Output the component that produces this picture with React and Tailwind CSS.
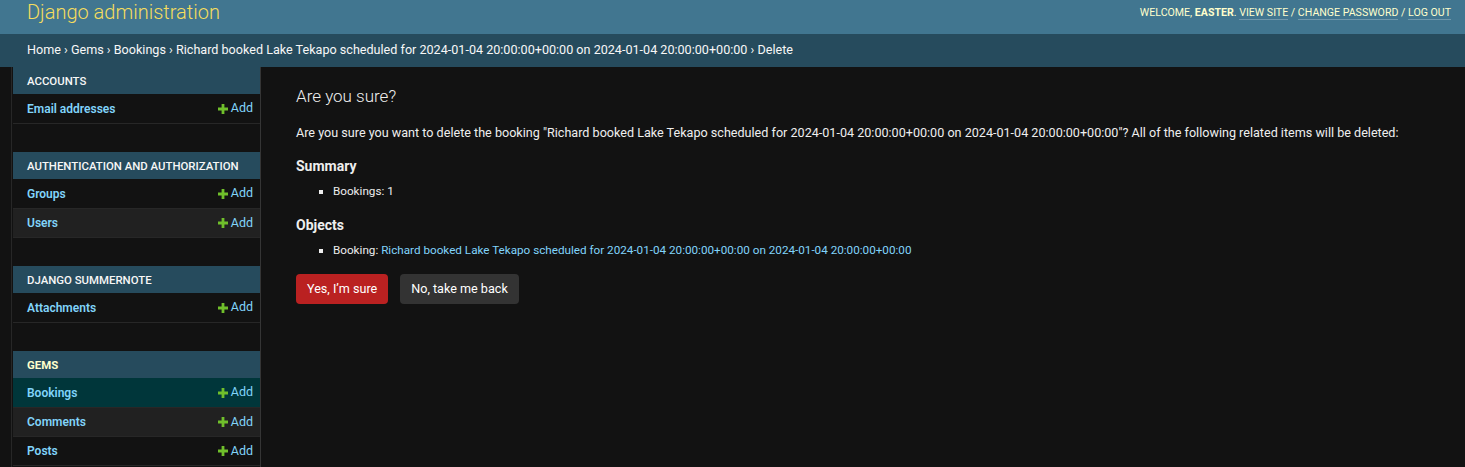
import React from 'react';

const apps = [
  { name: 'Accounts', models: ['Email addresses'] },
  { name: 'Authentication and Authorization', models: ['Groups', 'Users'] },
  { name: 'Django Summernote', models: ['Attachments'] },
  { name: 'Gems', models: ['Bookings', 'Comments', 'Posts'], current: true },
];

const booking = 'Richard booked Lake Tekapo scheduled for 2024-01-04 20:00:00+00:00 on 2024-01-04 20:00:00+00:00';

const PlusIcon = () => (
  <svg width="10" height="10" viewBox="0 0 10 10" className="mr-[3px]">
    <path d="M3.6 0h2.8v3.6H10v2.8H6.4V10H3.6V6.4H0V3.6h3.6z" fill="#70bf2b" />
  </svg>
);

const App = () => {
  return (
    <div className="min-h-screen bg-[#121212] text-[#eeeeee] text-[12.6px]" style={{ fontFamily: 'Roboto, "Liberation Sans", sans-serif' }}>
      {/* Header */}
      <div className="h-[34px] bg-[#417690] flex items-center justify-between pl-[27px] pr-[14px]">
        <div className="text-[20px] font-light text-[#f5dd5d] leading-none -mt-[10px]">Django administration</div>
        <div className="text-[10.6px] uppercase text-[#ffffcc] -mt-[9px]">
          Welcome, <strong className="font-bold">Easter</strong>.{' '}
          <a className="border-b border-white/25">View site</a> /{' '}
          <a className="border-b border-white/25">Change password</a> /{' '}
          <a className="border-b border-white/25">Log out</a>
        </div>
      </div>

      {/* Breadcrumbs */}
      <div className="h-[33px] bg-[#264b5d] flex items-center px-[27px] text-[#f7f7f7] text-[12.6px]">
        Home › Gems › Bookings › {booking} › Delete
      </div>

      <div className="flex">
        {/* Sidebar toggle strip */}
        <div className="w-[12px] border-r border-[#272727] shrink-0" />

        {/* Sidebar */}
        <div className="w-[249px] shrink-0 border-r border-[#353535] pl-[1px]">
          {apps.map((app) => (
            <div key={app.name} className="mb-[28px] border-b border-[#272727]">
              <div className={`h-[27px] bg-[#264b5d] flex items-center pl-[14px] pt-[2px] text-[11.4px] uppercase ${app.current ? 'text-[#ffffcc] font-bold' : 'text-[#f7f7f7] font-medium'}`}>
                {app.name}
              </div>
              {app.models.map((m, i) => (
                <div
                  key={m}
                  className={`h-[29px] flex items-center justify-between pl-[14px] pr-[7px] ${i > 0 ? 'border-t border-[#272727]' : ''} ${app.current && i === 0 ? 'bg-[#00363a]' : i % 2 === 1 ? 'bg-[#212121]' : ''}`}
                >
                  <span className="text-[#81d4fa] font-semibold text-[12px]">{m}</span>
                  <span className="flex items-center text-[#81d4fa] text-[12.5px]">
                    <PlusIcon />Add
                  </span>
                </div>
              ))}
            </div>
          ))}
        </div>

        {/* Content */}
        <div className="flex-1 pl-[35px] pt-[18px]">
          <h1 className="text-[17px] leading-[22px] font-light text-[#eeeeee] mb-[17px]">Are you sure?</h1>
          <p className="leading-[18px] mb-[15px]">
            Are you sure you want to delete the booking "{booking}"? All of the following related items will be deleted:
          </p>
          <h2 className="text-[14px] leading-[18px] font-bold mb-[8px]">Summary</h2>
          <ul className="list-[square] pl-[37px] mb-[17px]">
            <li className="text-[11.7px] leading-[16px]">Bookings: 1</li>
          </ul>
          <h2 className="text-[14px] leading-[18px] font-bold mb-[8px]">Objects</h2>
          <ul className="list-[square] pl-[37px] mb-[16px]">
            <li className="text-[11.7px] leading-[16px]">
              Booking: <a className="text-[#81d4fa]">{booking}</a>
            </li>
          </ul>
          <div className="flex gap-[12px]">
            <button className="h-[30px] px-[11px] bg-[#ba2121] rounded-[4px] text-white text-[12.6px]">Yes, I’m sure</button>
            <button className="h-[30px] px-[11px] bg-[#333333] rounded-[4px] text-white text-[12.6px]">No, take me back</button>
          </div>
        </div>
      </div>
    </div>
  );
};

export default App;
